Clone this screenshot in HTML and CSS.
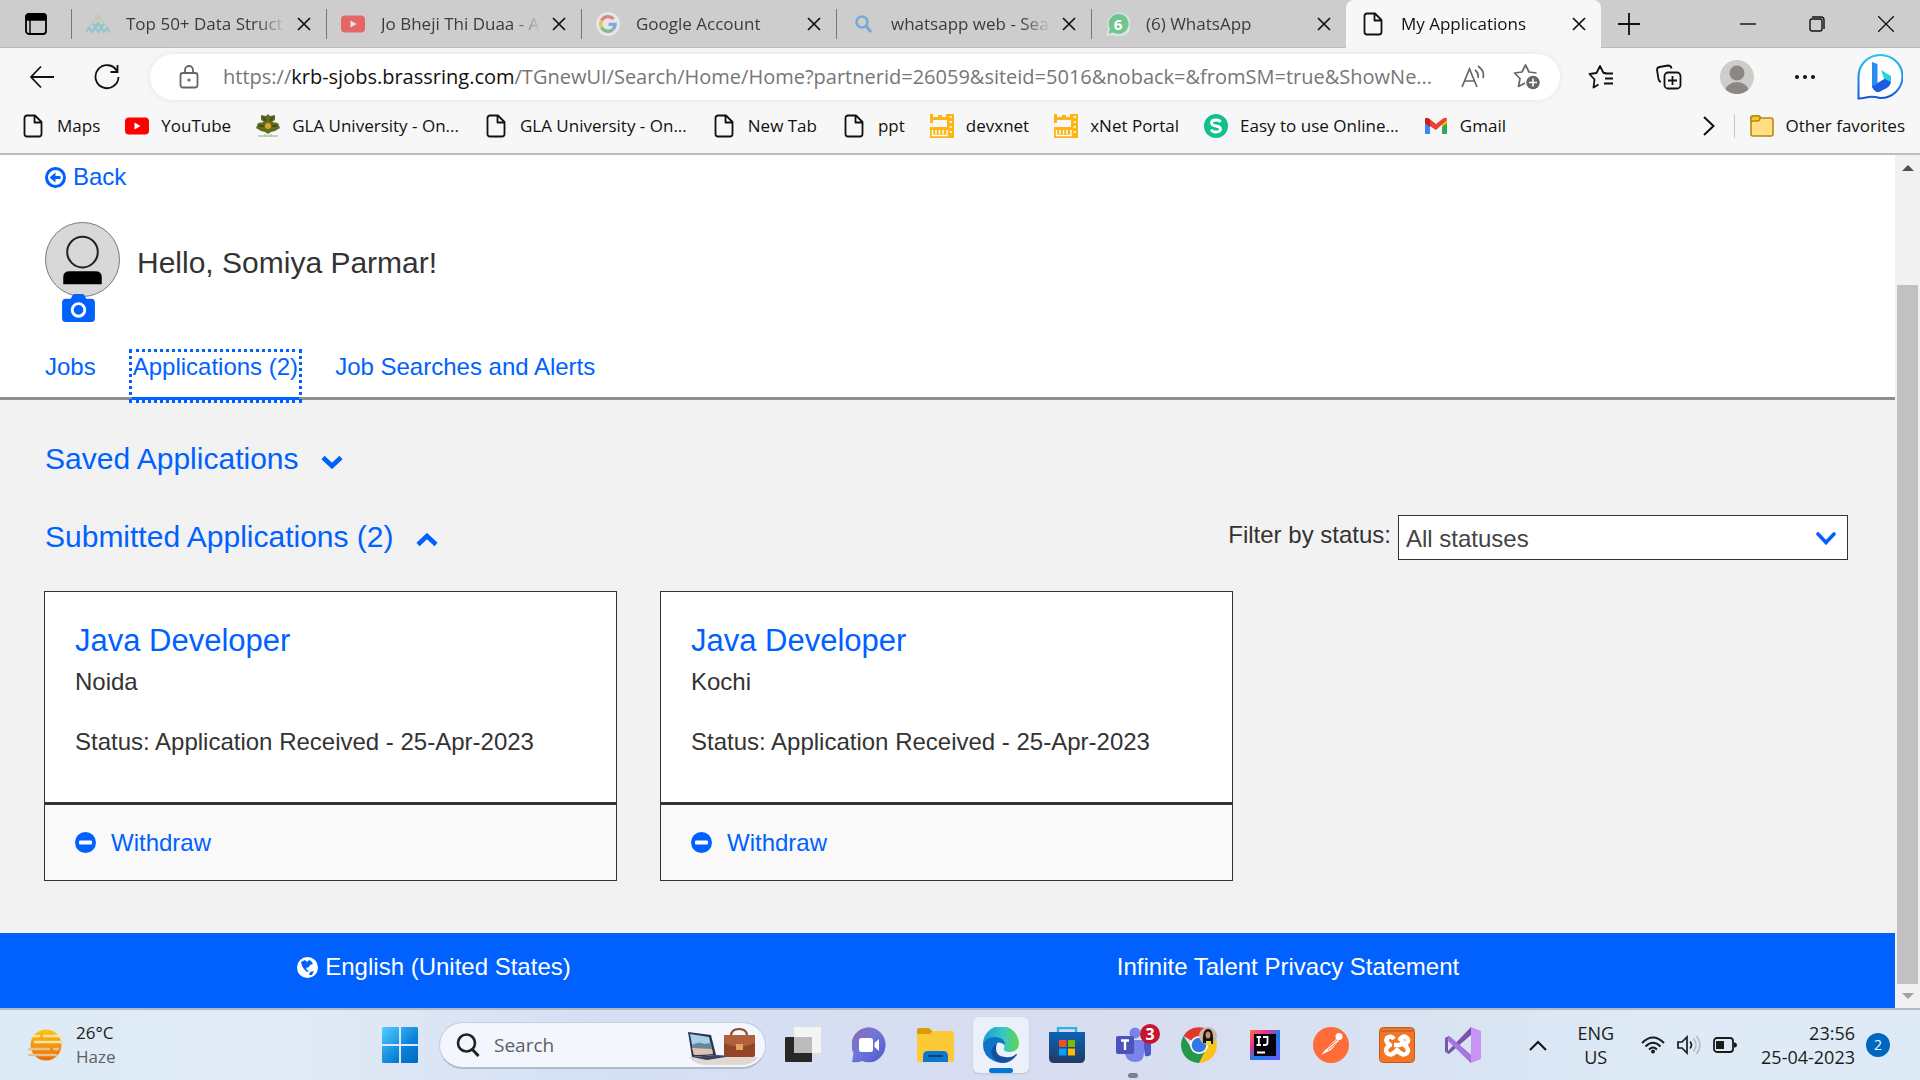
FILE: index.html
```html
<!DOCTYPE html>
<html lang="en">
<head>
<meta charset="utf-8">
<title>My Applications</title>
<link rel="stylesheet" href="styles.css">
</head>
<body>
<svg class="defs" aria-hidden="true">
  <defs>
    <symbol id="file" viewBox="0 0 24 24"><path d="M6 1.500H14L20.500 8V20A2.500 2.500 0 0 1 18 22.500H6A2.500 2.500 0 0 1 3.500 20V4A2.500 2.500 0 0 1 6 1.500ZM13.500 1.500V8.500H20.500" fill="none" stroke="#111" stroke-width="1.800" stroke-linejoin="round"/></symbol>
    <symbol id="x" viewBox="0 0 14 14"><path d="M1 1L13 13M13 1L1 13" stroke="#111" stroke-width="1.700" fill="none"/></symbol>
    <symbol id="youtube" viewBox="0 0 24 24"><rect y="3.500" width="24" height="17" rx="4" fill="red"/><path d="M9.500 8.500L15.500 12L9.500 15.500Z" fill="#fff"/></symbol>
    <symbol id="ruler" viewBox="0 0 24 24"><path d="M0 0H3V3H8V1H12V3H16V0H24V24H0V13H17V6H3V9H0Z" fill="#fdb515"/><path d="M2.500 16V21.500H17V16M6 16V20M9.500 16V20M13 16V20M19.500 3H22M19.500 8H22M19.500 13H22M19.500 18H22" fill="none" stroke="#fff" stroke-width="1.400"/></symbol>
    <symbol id="minus" viewBox="0 0 21 21"><circle cx="10.500" cy="10.500" r="10.500" fill="#0061ff"/><rect x="4" y="8.500" width="13" height="4" rx="1" fill="#fff"/></symbol>
    <symbol id="down" viewBox="0 0 22 14"><path d="M2 2.500L11 11L20 2.500" fill="none" stroke="#0061ff" stroke-width="4.600"/></symbol>
  </defs>
</svg>

<header class="browser">
  <div class="tabs">
    <button class="tab-menu" aria-label="Tab actions"><svg width="22" height="22" viewBox="0 0 22 22"><rect x="1" y="1" width="20" height="20" rx="3" fill="none" stroke="#000" stroke-width="1.800"/><path d="M1 3Q1 1 4 1H18Q21 1 21 3V7H1ZM5 7V21" stroke="#000" stroke-width="1.400"/></svg></button>
    <div class="tab"><svg class="ico" viewBox="0 0 24 24"><path d="M9 8L12 4L15 8M6 12H18" fill="none" stroke="#e3bd94" stroke-width="3" stroke-dasharray="3 2"/><path d="M4 14L12 3L20 14M3 16H21" fill="none" stroke="#b3cdd0" stroke-width="2" stroke-dasharray="3 1"/><path d="M0 20L3 16L6 20L9 16L12 20L15 16L18 20L21 16L24 20M7 12L10 15L12 11L15 15L18 12" fill="none" stroke="#8cc6ca" stroke-width="2"/></svg><span class="tab-title">Top 50+ Data Struct</span><button class="close" aria-label="Close tab"><svg><use href="#x"/></svg></button></div>
    <div class="tab"><svg class="ico faded"><use href="#youtube"/></svg><span class="tab-title">Jo Bheji Thi Duaa - A</span><button class="close" aria-label="Close tab"><svg><use href="#x"/></svg></button></div>
    <div class="tab"><svg class="ico faded" viewBox="0 0 24 24"><circle cx="12" cy="12" r="12" fill="#fff"/><g fill="none" stroke-width="3.200"><path d="M17.500 7A7.300 7.300 0 0 0 5.600 8.500" stroke="#ea4335"/><path d="M5.600 8.500A7.300 7.300 0 0 0 5.600 15.500" stroke="#fbbc05"/><path d="M5.600 15.500A7.300 7.300 0 0 0 16.800 17.500" stroke="#34a853"/><path d="M16.800 17.500A7.300 7.300 0 0 0 19.300 12.300H12.500" stroke="#4285f4"/></g></svg><span class="tab-title">Google Account</span><button class="close" aria-label="Close tab"><svg><use href="#x"/></svg></button></div>
    <div class="tab"><svg class="ico" viewBox="0 0 24 24"><circle cx="11" cy="10" r="5.500" fill="none" stroke="#78a9d8" stroke-width="2.600"/><path d="M15 14L20 20" stroke="#78a9d8" stroke-width="3"/></svg><span class="tab-title">whatsapp web - Sea</span><button class="close" aria-label="Close tab"><svg><use href="#x"/></svg></button></div>
    <div class="tab"><svg class="ico" viewBox="0 0 24 24"><path d="M0 24L2 17A12 12 0 1 1 7 23Z" fill="#dde3df"/><path d="M2.500 21.500L4 17A10 10 0 1 1 7.500 20.500Z" fill="#6fc78d"/><text x="12" y="18" text-anchor="middle" class="badge-six">6</text></svg><span class="tab-title">(6) WhatsApp</span><button class="close" aria-label="Close tab"><svg><use href="#x"/></svg></button></div>
    <div class="tab active"><svg class="ico"><use href="#file"/></svg><span class="tab-title">My Applications</span><button class="close" aria-label="Close tab"><svg><use href="#x"/></svg></button></div>
    <button class="new-tab" aria-label="New tab"><svg width="22" height="22" viewBox="0 0 22 22"><path d="M11 0V22M0 11H22" stroke="#111" stroke-width="1.800"/></svg></button>
    <div class="window-buttons">
      <button aria-label="Minimize"><svg width="16" height="16" viewBox="0 0 16 16"><path d="M0 8H16" stroke="#111" stroke-width="1.400"/></svg></button>
      <button aria-label="Restore"><svg width="16" height="16" viewBox="0 0 16 16"><rect x="1" y="3" width="12" height="12" rx="2" fill="none" stroke="#111" stroke-width="1.400"/><path d="M3 1H12Q15 1 15 4V13" fill="none" stroke="#111" stroke-width="1.400"/></svg></button>
      <button aria-label="Close"><svg width="16" height="16" viewBox="0 0 16 16"><path d="M0 0L16 16M16 0L0 16" stroke="#111" stroke-width="1.300"/></svg></button>
    </div>
  </div>

  <div class="toolbar">
    <button class="nav-btn" aria-label="Back"><svg width="24" height="24" viewBox="0 0 24 24"><path d="M24 12H1M11 1.500L1 12L11 22.500" fill="none" stroke="#111" stroke-width="1.800"/></svg></button>
    <button class="nav-btn" aria-label="Refresh"><svg width="26" height="26" viewBox="0 0 26 26"><path d="M23 7A11.500 11.500 0 1 0 24.500 13M23.500 1V8H16.500" fill="none" stroke="#111" stroke-width="1.800"/></svg></button>
    <div class="address">
      <svg width="20" height="24" viewBox="0 0 20 24"><rect x="1.500" y="8" width="17" height="14.500" rx="2.500" fill="none" stroke="#666" stroke-width="1.800"/><path d="M6 8V5A4 4 0 0 1 14 5V8" fill="none" stroke="#666" stroke-width="1.800"/><circle cx="10" cy="15" r="1.600" fill="#666"/></svg>
      <span class="url">https://<b>krb-sjobs.brassring.com</b>/TGnewUI/Search/Home/Home?partnerid=26059&amp;siteid=5016&amp;noback=&amp;fromSM=true&amp;ShowNe...</span>
      <div class="address-tools">
        <button aria-label="Read aloud"><svg width="24" height="24" viewBox="0 0 24 24"><path d="M1 22L8.500 4L16 22M3.500 16H13.500M14 5Q18 8 17 13M17 1Q24 6 22 13" fill="none" stroke="#666" stroke-width="1.700"/></svg></button>
        <button aria-label="Add to favorites"><svg width="27" height="27" viewBox="0 0 27 27"><path d="M23.500 10L16 9L12.500 2L9 9L1.500 10L7 15.500L5.500 23.500L12 20" fill="none" stroke="#666" stroke-width="1.700" stroke-linejoin="round"/><circle cx="20" cy="19.500" r="6.800" fill="#666"/><path d="M20 15.500V23.500M16 19.500H24" stroke="#fff" stroke-width="1.600"/></svg></button>
      </div>
    </div>
    <button class="tool" aria-label="Favorites"><svg width="26" height="26" viewBox="0 0 26 26"><path d="M18 9L15.500 9L12 2L8.500 9L1.500 10L6.500 15.500L5.500 23.500L10.500 20.500M17 9.500H25M17 14.500H25M16 19.500H25" fill="none" stroke="#111" stroke-width="1.800" stroke-linejoin="round"/></svg></button>
    <button class="tool" aria-label="Collections"><svg width="26" height="26" viewBox="0 0 26 26"><rect x="8.500" y="8.500" width="16" height="16" rx="3.500" fill="none" stroke="#111" stroke-width="1.800"/><path d="M16.500 12V21M12 16.500H21M5 18Q3 17.500 2.500 15L1 6Q1 3.500 3.500 3L12 1.500Q15 1.500 15.500 4.500" fill="none" stroke="#111" stroke-width="1.800"/></svg></button>
    <button class="tool" aria-label="Profile"><svg width="34" height="34" viewBox="0 0 34 34"><clipPath id="pc"><circle cx="17" cy="17" r="17"/></clipPath><g clip-path="url(#pc)"><rect width="34" height="34" fill="#cfcdca"/><circle cx="17" cy="13" r="7.500" fill="#8b8884"/><ellipse cx="17" cy="32" rx="12" ry="10" fill="#8b8884"/></g></svg></button>
    <button class="tool" aria-label="Settings"><svg width="20" height="6" viewBox="0 0 20 6"><g fill="#111"><circle cx="2" cy="3" r="2"/><circle cx="10" cy="3" r="2"/><circle cx="18" cy="3" r="2"/></g></svg></button>
    <button class="bing" aria-label="Bing"><svg width="46" height="46" viewBox="0 0 46 46"><defs><linearGradient id="bg1" x1="0" y1="0" x2="0" y2="1"><stop stop-color="#22c4f2"/><stop offset="1" stop-color="#1557d8"/></linearGradient></defs><path d="M1.500 44.500V23A22 21.500 0 1 1 23 44Q15 42 9 43.500Q5 44.500 1.500 44.500Z" fill="#fff" stroke="url(#bg1)" stroke-width="2"/><path d="M15 8L20.500 10V29L15 34Z" fill="#2a8cf0"/><path d="M15 33L20.500 29L28 24.500L34 27Q34 32 29 34.500L22 38Q18 39 15 33Z" fill="#1d5be0"/><path d="M24 16L34 22V28L27 24.500Z" fill="#2ed0e0"/></svg></button>
  </div>

  <nav class="bookmarks" aria-label="Favorites bar">
    <a href="#"><svg class="ico"><use href="#file"/></svg>Maps</a>
    <a href="#"><svg class="ico"><use href="#youtube"/></svg>YouTube</a>
    <a href="#"><svg class="ico" viewBox="0 0 24 24"><path d="M5 1L10 2L12 0L14 2L19 1V6L16 8L22 9L24 14L19 17L15 18L12 20L9 18L5 17L0 14L2 9L8 8L5 6Z" fill="#626b22"/><circle cx="12" cy="12" r="3" fill="#d9a520"/><path d="M7 3L10 7M17 3L14 7M3 12H8M21 12H16" stroke="#37551f" stroke-width="2"/><path d="M2 22H22M9 20V23M15 20V23" stroke="#a7cba4" stroke-width="1.500"/></svg>GLA University - On...</a>
    <a href="#"><svg class="ico"><use href="#file"/></svg>GLA University - On...</a>
    <a href="#"><svg class="ico"><use href="#file"/></svg>New Tab</a>
    <a href="#"><svg class="ico"><use href="#file"/></svg>ppt</a>
    <a href="#"><svg class="ico"><use href="#ruler"/></svg>devxnet</a>
    <a href="#"><svg class="ico"><use href="#ruler"/></svg>xNet Portal</a>
    <a href="#"><svg class="ico" viewBox="0 0 24 24"><circle cx="12" cy="12" r="12" fill="#11c08c"/><path d="M16.500 8Q15.500 6 12 6Q7.500 6 7.500 9Q7.500 11.300 12 12Q16.500 12.700 16.500 15Q16.500 18 12 18Q8 18 7.200 15.500" fill="none" stroke="#fff" stroke-width="2.800"/></svg>Easy to use Online...</a>
    <a href="#"><svg class="ico" viewBox="0 0 24 24"><path d="M1 6V20H6V10Z" fill="#4285f4"/><path d="M23 6V20H18V10Z" fill="#34a853"/><path d="M18 6L23 4V9L18 13Z" fill="#fbbc04"/><path d="M1 9V6Q1 2.500 5 4.500L12 10L19 4.500Q23 2.500 23 6L12 16Z" fill="#ea4335"/><path d="M1 9V6Q1 2.500 6 5.500V13Z" fill="#c5221f"/></svg>Gmail</a>
    <button class="more" aria-label="More favorites"><svg width="12" height="20" viewBox="0 0 12 20"><path d="M1 1L10.500 10L1 19" fill="none" stroke="#111" stroke-width="2"/></svg></button>
    <a class="other" href="#"><svg class="ico" viewBox="0 0 24 24"><path d="M1 4Q1 2 3 2H8Q10 2 11 4H21Q23 4 23 6V20Q23 22 21 22H3Q1 22 1 20Z" fill="#ffdf82" stroke="#b98712" stroke-width="1.600"/><path d="M1 4Q1 2 3 2H8Q10 2 10 4Q10 7 7 7H1Z" fill="#f6c62e" stroke="#b98712" stroke-width="1.400"/></svg>Other favorites</a>
  </nav>
</header>

<div class="viewport">
  <div class="page">
    <section class="profile">
      <a class="back" href="#"><svg width="21" height="21" viewBox="0 0 21 21"><circle cx="10.500" cy="10.500" r="9" fill="none" stroke="#0061ff" stroke-width="3"/><path d="M4.500 10.500L10.500 5.500V9H15.500V12H10.500V15.500Z" fill="#0061ff"/></svg>Back</a>
      <div class="hello">
        <div class="avatar">
          <svg width="75" height="75" viewBox="0 0 76 76"><circle cx="38" cy="38" r="37.500" fill="#d8d8d8" stroke="#777"/><circle cx="38" cy="30.500" r="15.500" fill="none" stroke="#222" stroke-width="2"/><path d="M18.500 63V56Q18.500 50 25 50H51Q57.500 50 57.500 56V63Z" fill="#000"/></svg>
          <button class="camera" aria-label="Change photo"><svg width="33" height="28" viewBox="0 0 34 29"><path d="M4 5H9L11 1Q12 0 13 0H21Q22 0 23 1L25 5H30Q34 5 34 9V25Q34 29 30 29H4Q0 29 0 25V9Q0 5 4 5Z" fill="#0061ff"/><circle cx="17" cy="16.500" r="6.500" fill="none" stroke="#fff" stroke-width="3"/></svg></button>
        </div>
        <h1>Hello, Somiya Parmar!</h1>
      </div>
      <nav class="sections">
        <a href="#">Jobs</a>
        <a class="current" href="#">Applications (2)</a>
        <a href="#">Job Searches and Alerts</a>
      </nav>
    </section>

    <main>
      <button class="group">Saved Applications <svg width="22" height="14"><use href="#down"/></svg></button>
      <div class="group-row">
        <button class="group">Submitted Applications (2) <svg class="up" width="22" height="14"><use href="#down"/></svg></button>
        <div class="filter">
          <label for="status">Filter by status:</label>
          <div class="select"><select id="status"><option>All statuses</option></select><svg width="20" height="13" viewBox="0 0 20 13"><path d="M2 2L10 10.500L18 2" fill="none" stroke="#0061ff" stroke-width="3.600" stroke-linecap="round"/></svg></div>
        </div>
      </div>
      <div class="cards">
        <article class="card">
          <div class="card-body"><h2><a href="#">Java Developer</a></h2><p>Noida</p><p class="status">Status: Application Received - 25-Apr-2023</p></div>
          <div class="card-foot"><button><svg width="21" height="21"><use href="#minus"/></svg>Withdraw</button></div>
        </article>
        <article class="card">
          <div class="card-body"><h2><a href="#">Java Developer</a></h2><p>Kochi</p><p class="status">Status: Application Received - 25-Apr-2023</p></div>
          <div class="card-foot"><button><svg width="21" height="21"><use href="#minus"/></svg>Withdraw</button></div>
        </article>
      </div>
    </main>

    <footer class="site-foot">
      <a href="#"><svg width="21" height="21" viewBox="0 0 21 21"><circle cx="10.500" cy="10.500" r="10.500" fill="#fff"/><path d="M4 5L8 3L10 5L12 3L14 4L16 7L13 8L12 10L9 11L10 13L12 14L10 15L7 12L5 9ZM13 15L17 14L15 18L12 18Z" fill="#0061ff"/></svg>English (United States)</a>
      <a href="#">Infinite Talent Privacy Statement</a>
    </footer>
  </div>
  <div class="scrollbar" aria-hidden="true">
    <svg width="12" height="6" viewBox="0 0 12 6"><path d="M0 6L6 0L12 6Z" fill="#505050"/></svg>
    <div class="track"><div class="thumb"></div></div>
    <svg width="12" height="6" viewBox="0 0 12 6"><path d="M0 0L6 6L12 0Z" fill="#a3a3a3"/></svg>
  </div>
</div>

<div class="taskbar">
  <button class="weather">
    <svg width="36" height="32" viewBox="0 0 36 32"><defs><linearGradient id="sun" x1="0" y1="0" x2="0" y2="1"><stop stop-color="#fcc614"/><stop offset="1" stop-color="#e96a0b"/></linearGradient></defs><circle cx="18" cy="16" r="15.500" fill="url(#sun)"/><g stroke="#fbe3a5" stroke-width="2.400" stroke-linecap="round"><path d="M5 7H11M16 7H34M7 13H34"/><path d="M1 20H21M26 20H30M1 26H28" stroke="#e4c48b"/></g></svg>
    <span>26°C<small>Haze</small></span>
  </button>
  <div class="apps">
    <button class="app" aria-label="Start"><svg width="36" height="36" viewBox="0 0 36 36"><defs><linearGradient id="win" x1="0" y1="0" x2="1" y2="1"><stop stop-color="#4fd0ff"/><stop offset=".6" stop-color="#0c82da"/><stop offset="1" stop-color="#0067c0"/></linearGradient></defs><path d="M1 0H17V17H0V1ZM19 0H35L36 1V17H19ZM0 19H17V36H1L0 35ZM19 19H36V35L35 36H19Z" fill="url(#win)"/></svg></button>
    <div class="search">
      <svg width="24" height="24" viewBox="0 0 24 24"><circle cx="10.500" cy="10" r="8.500" fill="none" stroke="#222" stroke-width="2.600"/><path d="M16 16L22.500 23" stroke="#222" stroke-width="3"/></svg>
      <input type="text" placeholder="Search" aria-label="Search">
      <svg width="72" height="42" viewBox="0 0 72 42"><path d="M2 33H71Q66 41 56 41H20Q8 41 2 33Z" fill="#e2d8d2"/><path d="M1 8L24 11L29 31L5 33Z" fill="#2d3350"/><path d="M3 10L22 13L26 30L7 31Z" fill="#a8cfe8"/><path d="M5 21Q12 17 17 20L24 19L26 30H7Z" fill="#6a8798"/><path d="M5 24L25 25L26 30L7 31Z" fill="#dfc3ac"/><path d="M5 33L29 31L45 32L20 36Z" fill="#3b415e"/><path d="M44 12Q44 5 52 5Q60 5 60 12" fill="none" stroke="#8c4a2b" stroke-width="2"/><rect x="37" y="11" width="31" height="22" rx="2" fill="#934529"/><path d="M37 11H68V19Q52 26 37 19Z" fill="#b2603b"/><rect x="49" y="20" width="7" height="6" fill="#e0a45c"/></svg>
    </div>
    <button class="app" aria-label="Task view"><svg width="36" height="36" viewBox="0 0 36 36"><rect x="0" y="10" width="27" height="25" rx="1" fill="#282828"/><rect x="9" y="0" width="27" height="26" rx="1" fill="#f4f4f4"/><path d="M9 10H27V26H9Z" fill="#bcbcbc"/></svg></button>
    <button class="app" aria-label="Chat"><svg width="34" height="36" viewBox="0 0 34 36"><defs><linearGradient id="chat" x1="0" y1="0" x2="1" y2="1"><stop stop-color="#9069ac"/><stop offset=".45" stop-color="#6e78d8"/><stop offset="1" stop-color="#5256cc"/></linearGradient></defs><path d="M0 35L1.500 26A17 17.500 0 1 1 10 34Q6 36 0 35Z" fill="url(#chat)"/><rect x="7" y="11" width="14" height="14" rx="2.500" fill="#fff"/><path d="M22.500 16L27 12V24L22.500 20Z" fill="#fff"/></svg></button>
    <button class="app" aria-label="File Explorer"><svg width="37" height="34" viewBox="0 0 37 34"><path d="M0 2Q0 0 2 0H12L16 4V12H0Z" fill="#dc9a05"/><path d="M0 6H13L16 3H35Q37 3 37 5V32Q37 34 35 34H2Q0 34 0 32Z" fill="#fdc937"/><path d="M6 34V28Q6 23 11 23H26Q31 23 31 28V34Z" fill="#0d76cf"/><path d="M11 28H26" stroke="#07437c" stroke-width="2"/></svg></button>
    <button class="app running selected" aria-label="Edge"><svg width="36" height="36" viewBox="0 0 36 36"><defs><linearGradient id="eg" x1="0" x2="1"><stop stop-color="#1c9cd8"/><stop offset=".55" stop-color="#36c6c4"/><stop offset="1" stop-color="#63d84a"/></linearGradient></defs><path d="M0 18A18 18 0 0 1 36 16Q36 25 26 25Q20 25 21 21Q23 14 15 12Q5 10 0 18Z" fill="url(#eg)"/><path d="M0 18Q3 9 13 10Q22 11 22 18Q14 12 12 20Q11 31 22 35Q17 37 11 34Q0 29 0 18Z" fill="#0d74c6"/><path d="M14 16Q10 29 22 30Q29 31 33 27Q35 27 33 29Q25 39 14 34.500Q3 25 14 16Z" fill="#1251a0"/></svg></button>
    <button class="app" aria-label="Microsoft Store"><svg width="36" height="36" viewBox="0 0 36 36"><defs><linearGradient id="st" x1="0" y1="0" x2="0" y2="1"><stop stop-color="#0a64b8"/><stop offset="1" stop-color="#213a63"/></linearGradient></defs><path d="M9 7V1H27V7" fill="none" stroke="#29b5ea" stroke-width="2.400"/><path d="M0 5H36V31Q36 36 31 36H5Q0 36 0 31Z" fill="url(#st)"/><path d="M10 13H17.500V20H10Z" fill="#f25022"/><path d="M19 13H26V20H19Z" fill="#7fba00"/><path d="M10 21.500H17.500V28.500H10Z" fill="#00a4ef"/><path d="M19 21.500H26V28.500H19Z" fill="#ffb900"/></svg></button>
    <button class="app running" aria-label="Teams, 3 notifications"><svg width="56" height="42" viewBox="-10 0 56 42"><circle cx="20" cy="9" r="5.500" fill="#7b83eb"/><path d="M28 17H36V29Q36 33 30 32Z" fill="#5059c9"/><path d="M10 16H29V29Q29 38 20 38Q12 38 10 30Z" fill="#7b83eb"/><rect x="1" y="12" width="18" height="18" rx="2" fill="#4b53bc"/><path d="M6 16.500H14M10 16.500V26" stroke="#fff" stroke-width="2.400"/><circle cx="35" cy="10" r="10" fill="#c4162f"/><text x="35" y="16" text-anchor="middle" class="badge-three">3</text></svg></button>
    <button class="app" aria-label="Chrome"><svg width="36" height="36" viewBox="0 0 36 36"><path d="M18 18L2.500 9A18 18 0 0 1 33.500 9Z" fill="#df382c"/><path d="M18 18L33.500 9A18 18 0 0 1 18 36Z" fill="#fcc21b"/><path d="M2.500 9A18 18 0 0 0 18 36L25 22H11Z" fill="#23974a"/><circle cx="18" cy="18" r="9" fill="#fff"/><circle cx="18" cy="18" r="7.300" fill="#3279e6"/><circle cx="27" cy="9" r="9" fill="#c9b9a6"/><path d="M22 16Q21 2 27 2Q33 2 32 17Z" fill="#17130f"/><ellipse cx="27" cy="8" rx="2.400" ry="3.500" fill="#c98d69"/><path d="M25 14H30V18H25Z" fill="#e3df28"/></svg></button>
    <button class="app" aria-label="IntelliJ IDEA"><svg width="30" height="30" viewBox="0 0 30 30"><defs><linearGradient id="ij" x1="0" y1="0" x2="1" y2="1"><stop stop-color="#f9793a"/><stop offset=".3" stop-color="#e6318c"/><stop offset=".55" stop-color="#1580f0"/><stop offset="1" stop-color="#6b57ff"/></linearGradient></defs><path d="M0 0H30V30H0Z" fill="url(#ij)"/><path d="M4 4H26V26H4Z" fill="#08030b"/><path d="M6.500 7H11M8.800 7V15M6.500 15H11M13 7H17.500V12.500Q17.500 15 15 15H13M7 22.500H15" fill="none" stroke="#fff" stroke-width="1.800"/></svg></button>
    <button class="app" aria-label="Postman"><svg width="36" height="36" viewBox="0 0 36 36"><circle cx="18" cy="18" r="18" fill="#ff6c37"/><circle cx="26" cy="9.500" r="3.500" fill="#fff"/><path d="M23 12L26 14L18 23L8 28L13 22Z" fill="#fff"/><path d="M13 22L24 13M15 23L25 15" stroke="#ff6c37" stroke-width="1"/></svg></button>
    <button class="app" aria-label="XAMPP"><svg width="36" height="36" viewBox="0 0 36 36"><rect x=".5" y=".5" width="35" height="35" rx="4" fill="#f37623" stroke="#bd591a"/><path d="M2 3H34V5H2Z" fill="#c66834"/><path d="M15 12Q12 8 8 11Q6 15 11 18Q5 22 8 26Q12 30 18 23Q24 30 28 26Q31 22 25 18Q31 14 28 11Q25 8 21 12Q26 14 21 18H15" fill="none" stroke="#fff" stroke-width="4.500" stroke-linejoin="round"/></svg></button>
    <button class="app" aria-label="Visual Studio"><svg width="36" height="36" viewBox="0 0 36 36"><path d="M0 11L4 9L26 28V36L3 12V24L0 25Z" fill="#7a54aa"/><path d="M0 25L4 27L26 8V0L3 24Z" fill="#7a54aa"/><path d="M26 0L36 4V32L26 36Z" fill="#c793f5"/><path d="M4 9L26 28V36L2 13Z" fill="#a377dd"/></svg></button>
  </div>
  <div class="tray">
    <button aria-label="Show hidden icons"><svg width="18" height="11" viewBox="0 0 18 11"><path d="M1 10L9 2L17 10" fill="none" stroke="#111" stroke-width="2"/></svg></button>
    <button class="lang">ENG<br>US</button>
    <button class="status-icons" aria-label="Network, sound, battery">
      <svg width="24" height="18" viewBox="0 0 24 18"><g fill="none" stroke="#1b1b1b" stroke-width="1.900"><path d="M1 7Q12-4 23 7"/><path d="M4.500 10.500Q12 3 19.500 10.500"/><path d="M8 13.500Q12 9.500 16 13.500"/></g><circle cx="12" cy="15.500" r="2" fill="#1b1b1b"/></svg>
      <svg width="24" height="20" viewBox="0 0 24 20"><path d="M1 7H5L10 2V18L5 13H1ZM13 6.500Q16 10 13 13.500" fill="none" stroke="#1b1b1b" stroke-width="1.700"/><path d="M16.500 3.500Q21.500 10 16.500 16.500M19.500 1Q26.500 10 19.500 19" fill="none" stroke="#b0b9c2" stroke-width="1.500"/></svg>
      <svg width="24" height="16" viewBox="0 0 24 16"><rect x="1" y="1" width="19" height="14" rx="3" fill="none" stroke="#1b1b1b" stroke-width="1.800"/><rect x="3" y="4" width="8" height="8" fill="#1b1b1b"/><path d="M21 5.500H22Q24 6 24 8Q24 10 22 10.500H21Z" fill="#1b1b1b"/></svg>
    </button>
    <button class="clock">23:56<br>25-04-2023</button>
    <span class="count">2</span>
  </div>
</div>
</body>
</html>
```
FILE: styles.css
```css
* { box-sizing: border-box; }
html, body { margin: 0; }
body {
  min-height: 100vh;
  display: flex;
  flex-direction: column;
  font: 24px/28px "Liberation Sans", Arial, sans-serif;
  color: #333;
  background: #fff;
}
.defs { position: absolute; width: 0; height: 0; }
svg { display: block; flex: none; }
h1, h2, p { margin: 0; font-weight: normal; }
a { color: inherit; text-decoration: none; }
button {
  border: 0;
  padding: 0;
  background: none;
  font: inherit;
  color: inherit;
  display: flex;
  align-items: center;
  justify-content: center;
}
.ico { width: 24px; height: 24px; }
.faded { opacity: .5; }

/* Browser frame */
.browser {
  font: 17px/24px "Open Sans", "Noto Sans", sans-serif;
  color: #111;
  background: #f7f7f7;
  border-bottom: 2px solid #bdbdbd;
}
.tabs { display: flex; height: 48px; background: #cdcdcd; box-shadow: inset 0 -1px #b9b9b9; }
.tab-menu { width: 71px; }
.tab {
  flex: 0 1 255px;
  min-width: 0;
  display: flex;
  align-items: center;
  gap: 16px;
  padding: 0 15px;
  color: #3c3c3c;
  background: linear-gradient(#777, #777) left center / 1px 30px no-repeat;
}
.tab-title {
  flex: 1;
  min-width: 0;
  margin-right: -12px;
  white-space: nowrap;
  mask-image: linear-gradient(to right, #000 78%, transparent 96%);
}
.tab.active { background: #f7f7f7; color: #111; border-radius: 8px 8px 0 0; }
.close svg { width: 14px; height: 14px; }
.new-tab { width: 56px; }
.window-buttons { margin-left: auto; display: flex; }
.window-buttons button { width: 69px; }
.badge-six { font: bold 15px "Open Sans", sans-serif; fill: #fff; }
.badge-three { font: bold 16px "Open Sans", sans-serif; fill: #fff; }

.toolbar { display: flex; align-items: center; height: 57px; padding-left: 9px; }
.nav-btn { width: 65px; }
.address {
  flex: 1;
  min-width: 0;
  height: 46px;
  margin: 0 7px 0 11px;
  padding: 0 20px 0 29px;
  display: flex;
  align-items: center;
  gap: 24px;
  border-radius: 23px;
  background: #fff;
  box-shadow: 0 0 6px #e4e4e4;
}
.address-tools { display: flex; align-items: center; gap: 28px; }
.url {
  flex: 1;
  min-width: 0;
  overflow: hidden;
  white-space: nowrap;
  font-size: 20px;
  line-height: 30px;
  color: #767676;
}
.url b { font-weight: normal; color: #111; }
.tool { width: 68px; }
.bing { width: 81px; }

.bookmarks { display: flex; align-items: center; gap: 25px; height: 48px; padding: 0 15px 6px 21px; }
.bookmarks a { display: flex; align-items: center; gap: 12px; white-space: nowrap; }
.more { margin-left: auto; }
.bookmarks .other { margin-left: -6px; padding-left: 15px; border-left: 1px solid #c8c8c8; }

/* Page */
.viewport { flex: 1; display: flex; }
.page { flex: 1; min-width: 0; display: flex; flex-direction: column; }
.profile { border-bottom: 3px solid #8f8f8f; padding: 8px 45px 0; color: #0061ff; }
.back { display: inline-flex; align-items: center; gap: 7px; }
.hello { display: flex; align-items: flex-start; gap: 17px; margin-top: 28px; }
.avatar { display: flex; flex-direction: column; }
.camera { position: relative; width: 33px; margin: -3px 0 0 17px; }
h1 { font-size: 30px; line-height: 34px; margin-top: 24px; color: #333; }
.sections { display: flex; gap: 36px; margin-top: 30px; }
.sections a { height: 45px; padding-top: 1px; }
.sections .current {
  position: relative;
  margin-bottom: -3px;
  height: 48px;
  padding: 1px 1px 0;
  border-bottom: 3px solid #0061ff;
  outline: 3px dotted #0061ff;
}
main { flex: 1; background: #f2f2f2; padding: 42px 45px 52px 44px; }
.group { gap: 22px; padding-left: 1px; font-size: 30px; line-height: 34px; color: #0061ff; }
.group svg { margin-top: 6px; }
.group .up { transform: rotate(180deg); }
.group-row { display: flex; align-items: center; justify-content: space-between; margin-top: 39px; }
.filter { display: flex; align-items: center; gap: 7px; margin-right: 2px; }
.filter label { padding-bottom: 4px; }
.select { position: relative; }
.select select {
  appearance: none;
  display: block;
  width: 450px;
  height: 45px;
  padding: 3px 40px 0 7px;
  border: 1px solid #333;
  border-radius: 0;
  background: #fff;
  font: inherit;
  color: #444;
}
.select svg { position: absolute; right: 12px; top: 17px; pointer-events: none; }
.cards { display: flex; gap: 43px; margin-top: 31px; }
.card { flex: 0 1 573px; border: 1px solid #333; background: #fff; }
.card-body { padding: 31px 30px 46px; border-bottom: 3px solid #333; }
h2 { font-size: 31px; line-height: 36px; margin-bottom: 9px; color: #0061ff; }
.status { margin-top: 32px; }
.card-foot { background: #f9f9f9; padding: 24px 30px 23px; color: #0061ff; }
.card-foot button { gap: 15px; }
.site-foot {
  display: grid;
  grid-template-columns: 1fr 1fr;
  padding: 20px 180px 27px 7px;
  background: #0061ff;
  color: #fff;
}
.site-foot a { display: flex; align-items: center; justify-content: center; gap: 7px; }

.scrollbar {
  width: 25px;
  background: #f1f1f1;
  display: flex;
  flex-direction: column;
  align-items: center;
  gap: 9px;
  padding: 10px 2px 9px;
}
.track { flex: 1; align-self: stretch; display: flex; flex-direction: column; }
.thumb { background: #c1c1c1; margin-top: auto; height: 87%; }

/* Taskbar */
.taskbar {
  display: flex;
  min-height: 72px;
  border-top: 2px solid #b0b8c4;
  background: linear-gradient(90deg, #dcebf7 0, #e1ebf5 15%, #d5e0f5 30%, #d8dcf0 55%, #d8e2f2 72%, #deebf6 88%, #deebf6 100%);
  font: 17px/24px "Open Sans", "Noto Sans", sans-serif;
  color: #1b1b1b;
}
.weather { flex: 0 0 367px; justify-content: flex-start; gap: 12px; padding-left: 28px; text-align: left; }
.weather small { display: block; font-size: 17px; color: #5c6065; }
.apps { display: flex; align-items: center; }
.app { width: 66px; height: 68px; position: relative; }
.running::after {
  content: "";
  position: absolute;
  left: 28px;
  bottom: 1px;
  width: 10px;
  height: 5px;
  border-radius: 3px;
  background: #7d838d;
}
.app.selected { width: 56px; height: 56px; margin: 0 5px; border-radius: 6px; background: #ecf0fa; box-shadow: 0 1px 2px #b9c2d2; }
.selected::after { left: 16px; width: 24px; bottom: 0; background: #0078d4; }
.search {
  width: 327px;
  height: 47px;
  margin: 0 4px 0 6px;
  padding: 0 6px 0 16px;
  display: flex;
  align-items: center;
  gap: 14px;
  border: 1px solid #c3cde0;
  border-bottom: 2px solid #b0bacd;
  border-radius: 24px;
  background: #f3f6fd;
}
.search input { flex: 1; min-width: 0; border: 0; padding: 0; background: none; font: inherit; font-size: 19px; }
.search input::placeholder { color: #5c5f66; opacity: 1; }
.tray { margin-left: auto; display: flex; align-items: center; padding-right: 30px; font-size: 18px; }
.lang { margin-left: 30px; }
.status-icons { margin-left: 27px; gap: 12px; }
.clock { margin-left: 24px; text-align: right; }
.count {
  width: 24px;
  height: 24px;
  margin-left: 11px;
  border-radius: 50%;
  background: #0067c0;
  color: #fff;
  font-size: 14px;
  text-align: center;
}
```
